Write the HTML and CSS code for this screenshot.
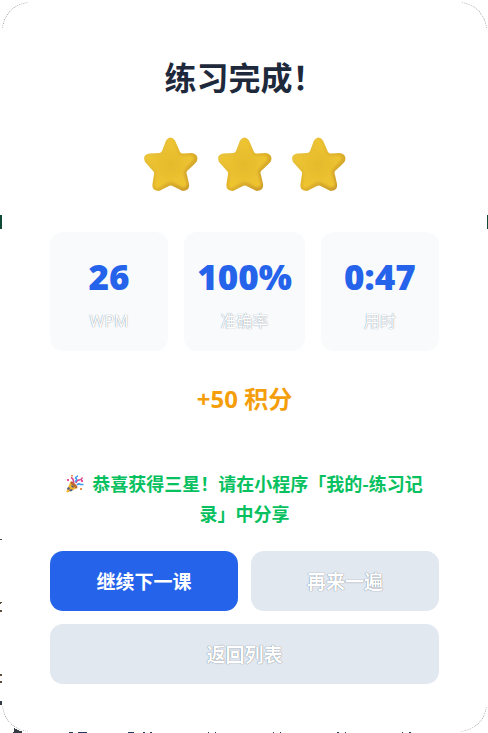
FILE: index.html
```html
<!DOCTYPE html>
<html lang="zh-CN">
  <head>
    <meta charset="UTF-8">
    <meta name="viewport" content="width=device-width, initial-scale=1.0">
    <title>练习完成</title>
    <link rel="stylesheet" href="styles.css">
  </head>
  <body>
    <!-- edges of the page behind the dialog -->
    <svg class="edge edge-left" width="24" height="733" aria-hidden="true">
      <path fill="#0f4a37" d="M0 215h2v14H0z" />
      <path fill="#4b4545" d="M0 539h2v1H0z" />
      <path fill="#5c4d38" d="M0 602h2v1H1v1H0zM0 610h2v2H0zM0 674h2v2H0zM0 681h2v2H0z" />
      <path fill="#363c46" d="M0 701h2v4H0zM14 728h1v1h2v1h2v1h3v2h-9v-1h1z" />
    </svg>
    <svg class="edge edge-right" width="1" height="733" aria-hidden="true">
      <path fill="#0f4a37" d="M0 215h1v14H0z" />
    </svg>
    <svg class="edge edge-bottom" width="488" height="1" aria-hidden="true">
      <path fill="#263c5c" d="M69 0h4v1h-4zM78 0h9v1h-9zM128 0h6v1h-6zM143 0h2v1h-2zM150 0h2v1h-2zM208 0h1v1h-1zM215 0h1v1h-1zM273 0h1v1h-1zM280 0h1v1h-1zM337 0h2v1h-2zM345 0h1v1h-1zM402 0h1v1h-1zM409 0h2v1h-2z" />
    </svg>

    <svg width="0" height="0" class="defs" aria-hidden="true">
      <defs>
        <radialGradient id="starFill" cx="50%" cy="52%" r="55%">
          <stop offset="0" stop-color="#e4ba2c" />
          <stop offset="0.6" stop-color="#ebc130" />
          <stop offset="1" stop-color="#f0c62f" />
        </radialGradient>
        <linearGradient id="starRim" x1="0" y1="0" x2="1" y2="1">
          <stop offset="0" stop-color="#eccb48" />
          <stop offset="0.5" stop-color="#e3b62c" />
          <stop offset="1" stop-color="#c6962a" />
        </linearGradient>
        <filter id="soft" x="-10%" y="-10%" width="120%" height="120%">
          <feGaussianBlur stdDeviation="1.3" />
        </filter>
        <symbol id="star" viewBox="0 0 54 54">
          <path fill="url(#starRim)" d="M22 3.500Q26.500 -2.500 31 3.500L36 15Q37 16.500 39 16.500L48 16Q55 17.500 53 24Q52 26 43 34Q42 36 43 38L45 47Q46 54 38.500 54L28.500 49Q27 48 25 49L15 54Q7.500 54 8.500 47L10 37Q10.500 35 9 34L1 25Q-2 18 5 16.500L15 16Q17 16 18 14Z" />
          <path fill="url(#starFill)" filter="url(#soft)" d="M24 4Q26.500 1 29 4L34 17Q35 19 38 19L47 18.500Q51 20 49 23L41 32Q39 34 40 37L43 47Q42 51 38 50L29 45.500Q26 44.500 23 46L14 51Q10 51 11 47L12.500 37Q13 34 11 32L3.500 23Q2 20 6 19L16 18.500Q19 18 20 16Z" />
        </symbol>
      </defs>
    </svg>

    <main class="card">
      <h1 class="title">练习完成！</h1>

      <div class="stars" role="img" aria-label="三星">
        <svg class="star"><use href="#star" /></svg>
        <svg class="star"><use href="#star" /></svg>
        <svg class="star"><use href="#star" /></svg>
      </div>

      <div class="stats">
        <div class="stat">
          <div class="stat-value">26</div>
          <div class="stat-label">WPM</div>
        </div>
        <div class="stat">
          <div class="stat-value">100%</div>
          <div class="stat-label">准确率</div>
        </div>
        <div class="stat">
          <div class="stat-value">0:47</div>
          <div class="stat-label">用时</div>
        </div>
      </div>

      <p class="points">+50 积分</p>

      <p class="message">
        <svg class="party" viewBox="0 0 18 18" aria-hidden="true">
          <path fill="#f2b632" d="M4.500 6.500L11.500 13L1.500 17.500Q0 17.500 .5 16Z" />
          <path fill="#4b5a86" d="M2 12l2 1-1 2-2-1zM5 14l2 1-2 1.500-2-1zM6 10l2 2-1 1-2-2z" />
          <ellipse cx="8" cy="9.800" rx="1.600" ry="4.500" transform="rotate(-46 8 9.800)" fill="#b86b35" />
          <path fill="none" stroke="#d9488f" stroke-width="1.600" d="M5 2.500Q8 4 7.500 8M10 8Q11 4.500 13.500 5Q15.500 5 16.500 2.500" />
          <path fill="none" stroke="#3e9bec" stroke-width="1.600" d="M9 7Q12 4 9.500 3Q10 1.500 12 1M11 10Q13 8 14.500 9.500L17.500 9.500" />
          <path fill="#ef4f9c" d="M1 4h2v2H1zM15 5h2v2h-2z" />
          <path fill="#ee9250" d="M14 13h2v2h-2zM5 0h2v1.500H5z" />
        </svg>
        恭喜获得三星！请在小程序「我的-练习记录」中分享
      </p>

      <div class="actions">
        <button type="button" class="btn btn-primary">继续下一课</button>
        <button type="button" class="btn">再来一遍</button>
        <button type="button" class="btn btn-wide">返回列表</button>
      </div>
    </main>
  </body>
</html>
```

FILE: styles.css
```css
* {
  box-sizing: border-box;
}

body {
  margin: 0;
  padding: 2px 1px 1px 2px;
  position: relative;
  background: #fff;
  font-family: "Noto Sans", "Noto Sans CJK SC", sans-serif;
}

.edge {
  position: absolute;
}

.edge-left {
  top: 0;
  left: 0;
}

.edge-right {
  top: 0;
  right: 0;
}

.edge-bottom {
  bottom: 0;
  left: 0;
}

.defs {
  position: absolute;
}

.card {
  position: relative;
  padding: 52px 48px 48px;
  text-align: center;
}

/* thin outline that shows only round the corners */
.card::before {
  content: "";
  position: absolute;
  inset: 0;
  border: 1px dotted #999;
  border-radius: 28px;
  pointer-events: none;
  -webkit-mask:
    linear-gradient(#000, #000) left top / 26px 26px no-repeat,
    linear-gradient(#000, #000) right top / 26px 26px no-repeat,
    linear-gradient(#000, #000) left bottom / 26px 26px no-repeat,
    linear-gradient(#000, #000) right bottom / 26px 26px no-repeat;
}

.title {
  margin: 0;
  font-family: "Noto Sans CJK SC", sans-serif;
  font-size: 32px;
  line-height: 44px;
  font-weight: 700;
  color: #1e293b;
}

.stars {
  display: flex;
  justify-content: center;
  gap: 20px;
  margin-top: 39px;
}

.star {
  width: 54px;
  height: 54px;
}

.stats {
  display: flex;
  gap: 16px;
  margin-top: 41px;
}

.stat {
  flex: 1;
  padding: 24px 13px 18px;
  border-radius: 13px;
  background: #f8fafc;
}

.stat-value {
  font-size: 35px;
  line-height: 42px;
  font-weight: 900;
  color: #2563eb;
}

.stat-label {
  margin-top: 11px;
  font-size: 16px;
  line-height: 24px;
  color: #fff;
  text-shadow: 0 0 1px #64748b;
}

.points {
  margin: 30px 0 0;
  font-size: 24px;
  line-height: 36px;
  font-weight: 700;
  color: #f59e0b;
}

.message {
  margin: 51px 0 0;
  padding: 0 8px;
  font-family: "Noto Sans CJK SC", sans-serif;
  font-size: 18px;
  line-height: 30px;
  font-weight: 700;
  color: #07c160;
}

.party {
  width: 18px;
  height: 18px;
  margin-right: 4px;
  vertical-align: -2px;
}

.actions {
  display: grid;
  grid-template-columns: 1fr 1fr;
  gap: 13px;
  margin-top: 23px;
}

.btn {
  padding: 15px;
  border: none;
  border-radius: 13px;
  background: #e2e8f0;
  font-family: "Noto Sans CJK SC", sans-serif;
  font-size: 19px;
  line-height: 30px;
  font-weight: 700;
  color: #fff;
  text-shadow: 0 0 1px #475569;
  cursor: pointer;
}

.btn-primary {
  background: #2563eb;
  text-shadow: none;
}

.btn-wide {
  grid-column: 1 / -1;
}
```
